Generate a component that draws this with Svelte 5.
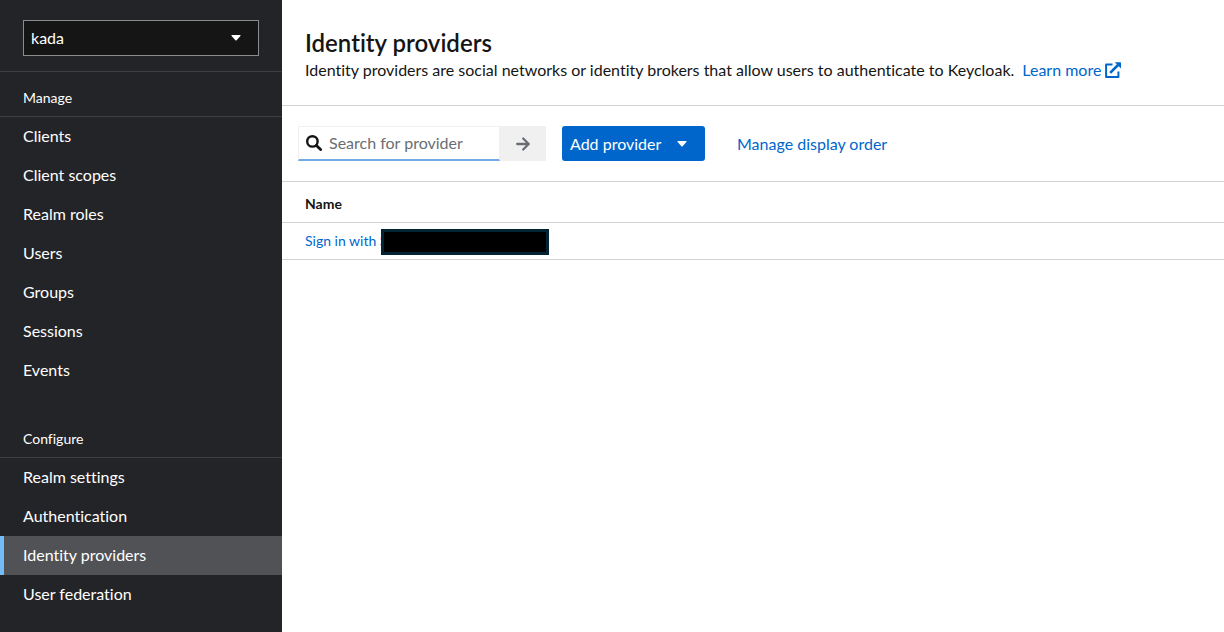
<script lang="ts">
  let realm: string = 'kada';
  let search: string = '';

  const sections: { title: string; items: string[] }[] = [
    {
      title: 'Manage',
      items: ['Clients', 'Client scopes', 'Realm roles', 'Users', 'Groups', 'Sessions', 'Events'],
    },
    {
      title: 'Configure',
      items: ['Realm settings', 'Authentication', 'Identity providers', 'User federation'],
    },
  ];

  let current: string = 'Identity providers';
</script>

<div class="page">
  <aside class="sidebar">
    <div class="realm">
      <select aria-label="Realm" bind:value={realm}>
        <option value="kada">kada</option>
      </select>
      <svg class="caret" viewBox="0 0 10 6" aria-hidden="true"><path d="M1 0h8q1 0 .4.9L5.6 5.3q-.6.6-1.2 0L.6.9Q0 0 1 0z" /></svg>
    </div>
    {#each sections as section}
      <nav class="section" aria-label={section.title}>
        <h2>{section.title}</h2>
        <ul>
          {#each section.items as item}
            <li>
              <a href="#{item}" class:active={item === current} on:click={() => (current = item)}>{item}</a>
            </li>
          {/each}
        </ul>
      </nav>
    {/each}
  </aside>

  <main>
    <header>
      <h1>Identity providers</h1>
      <p>
        <span>Identity providers are social networks or identity brokers that allow users to authenticate to Keycloak.</span>
        <a class="learn" href="#learn-more">
          Learn more
          <svg viewBox="0 0 16 16" aria-hidden="true">
            <path d="M7.5 2.6H1.1v12.3h12.3V9.5" fill="none" stroke="currentColor" stroke-width="2" stroke-linejoin="round" />
            <path d="M5.2 10.8 13 3" fill="none" stroke="currentColor" stroke-width="2.6" />
            <path d="M9.8.2h5.4q.8 0 .8.8v5.4z" fill="currentColor" />
          </svg>
        </a>
      </p>
    </header>

    <div class="toolbar">
      <form class="search" on:submit|preventDefault>
        <label>
          <svg viewBox="0 0 16 16" aria-hidden="true">
            <circle cx="6.4" cy="6.4" r="5.2" fill="none" stroke="currentColor" stroke-width="2.4" />
            <path d="m10.4 10.4 4.2 4.2" fill="none" stroke="currentColor" stroke-width="2.8" stroke-linecap="round" />
          </svg>
          <input type="text" aria-label="Search for provider" placeholder="Search for provider" bind:value={search} />
        </label>
        <button type="submit" aria-label="Search">
          <svg viewBox="0 0 14 14" aria-hidden="true">
            <path d="M1.2 7h11M7.2 1.5 12.7 7l-5.5 5.5" fill="none" stroke="currentColor" stroke-width="2.3" stroke-linecap="round" stroke-linejoin="round" />
          </svg>
        </button>
      </form>
      <button class="add" type="button">
        Add provider
        <svg class="caret" viewBox="0 0 10 6" aria-hidden="true"><path d="M1 0h8q1 0 .4.9L5.6 5.3q-.6.6-1.2 0L.6.9Q0 0 1 0z" /></svg>
      </button>
      <button class="order" type="button">Manage display order</button>
    </div>

    <table>
      <thead>
        <tr><th scope="col">Name</th></tr>
      </thead>
      <tbody>
        <tr>
          <td>
            <div class="provider">
              <a href="#provider">Sign in with S</a>
              <span class="redacted"></span>
            </div>
          </td>
        </tr>
      </tbody>
    </table>
  </main>
</div>

<style>
  :global(body) {
    background: #fff;
  }

  .page {
    display: grid;
    grid-template-columns: 282px 1fr;
    min-height: 100vh;
    font-family: Lato, 'Open Sans', sans-serif;
    font-size: 16px;
    font-variant-ligatures: none;
    line-height: 24px;
    color: #151515;
  }

  a {
    color: #06c;
    text-decoration: none;
  }

  button,
  input,
  select {
    box-sizing: border-box;
    font: inherit;
    border-radius: 0;
  }

  button {
    cursor: pointer;
  }

  .caret {
    width: 10px;
    height: 6px;
    fill: #fff;
    pointer-events: none;
  }

  .sidebar {
    background: #232428;
    color: #fff;
  }

  .realm {
    display: grid;
    align-items: center;
    padding: 20px 23px 15px;
    border-bottom: 1px solid #3e3f43;
  }

  .realm select,
  .realm .caret {
    grid-area: 1 / 1;
  }

  .realm select {
    height: 36px;
    padding: 0 7px;
    appearance: none;
    background: #151515;
    border: 1px solid #8a8d90;
    color: #fff;
  }

  .realm .caret {
    justify-self: end;
    margin-right: 18px;
  }

  .section {
    margin-bottom: 23px;
  }

  .section:last-child {
    margin-bottom: 0;
  }

  .section h2 {
    margin: 0;
    padding: 14px 23px 6px;
    border-bottom: 1px solid #3e3f43;
    font-size: 14px;
    font-weight: 400;
  }

  .section ul {
    margin: 0;
    padding: 0;
    list-style: none;
  }

  .section li a {
    display: block;
    padding: 7px 19px 8px;
    border-left: 4px solid transparent;
    color: #fff;
  }

  .section li a.active {
    background: #515256;
    border-left-color: #73bcf7;
  }

  header {
    padding: 28px 23px 23px;
    border-bottom: 1px solid #d2d2d2;
  }

  h1 {
    margin: 0;
    font-size: 24px;
    font-weight: 600;
    line-height: 30px;
  }

  header p {
    display: flex;
    gap: 8px;
    margin: 0;
  }

  .learn {
    display: flex;
    align-items: center;
    gap: 4px;
  }

  .learn svg {
    width: 16px;
    height: 16px;
  }

  .toolbar {
    display: flex;
    align-items: center;
    gap: 16px;
    padding: 20px 16px;
    border-bottom: 1px solid #d2d2d2;
  }

  .search {
    display: flex;
  }

  .search label {
    display: flex;
    align-items: center;
    box-sizing: border-box;
    width: 202px;
    height: 35px;
    gap: 7px;
    padding-left: 7px;
    border: 1px solid #f0f0f0;
    border-bottom: 2px solid #73a9e6;
  }

  .search label svg {
    flex: none;
    width: 16px;
    height: 16px;
  }

  .search input {
    width: 100%;
    min-width: 0;
    padding: 0;
    border: 0;
    outline: 0;
    background: none;
    color: #151515;
  }

  .search input::placeholder {
    color: #6a6e73;
    opacity: 1;
  }

  .search button {
    display: grid;
    place-items: center;
    width: 46px;
    padding: 0;
    border: 0;
    background: #f0f0f0;
    color: #6a6e73;
  }

  .search button svg {
    width: 14px;
    height: 14px;
  }

  .add {
    display: flex;
    align-items: center;
    justify-content: space-between;
    width: 143px;
    height: 35px;
    padding: 0 18px 0 8px;
    border: 0;
    border-radius: 3px;
    background: #06c;
    color: #fff;
  }

  .order {
    padding: 0 16px;
    border: 0;
    background: none;
    color: #06c;
  }

  table {
    width: 100%;
    border-collapse: collapse;
    font-size: 14px;
    text-align: left;
  }

  th,
  td {
    padding: 6px 23px;
    border-bottom: 1px solid #d2d2d2;
  }

  th {
    padding: 10px 23px 6px;
    font-weight: 700;
  }

  .provider {
    position: relative;
  }

  /* covers the rest of the provider name */
  .redacted {
    position: absolute;
    top: 0;
    left: 76px;
    box-sizing: border-box;
    width: 168px;
    height: 26px;
    border: 3px solid #032433;
    background: #000;
  }
</style>
